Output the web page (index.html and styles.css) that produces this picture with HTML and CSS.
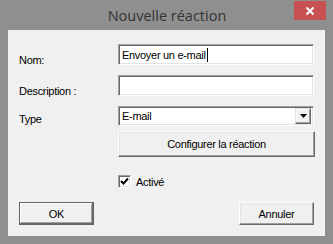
FILE: index.html
```html
<!DOCTYPE html>
<html lang="fr">
<head>
    <meta charset="UTF-8">
    <title>Nouvelle réaction</title>
    <link rel="stylesheet" href="styles.css">
</head>
<body>
    <div class="window">
        <div class="titlebar">
            <span></span>
            <div class="title">Nouvelle réaction</div>
            <div class="close">
                <svg width="10" height="10" viewBox="0 0 10 10">
                    <path d="M1.5 1.5 L8.5 8.5 M8.5 1.5 L1.5 8.5" stroke="#fff" stroke-width="2"/>
                </svg>
            </div>
        </div>

        <div class="client">
            <form class="form">
                <label class="lbl">Nom:</label>
                <div class="edit"><span>Envoyer un e-mail</span><i class="caret"></i></div>

                <label class="lbl">Description :</label>
                <div class="edit"></div>

                <label class="lbl">Type</label>
                <div class="combo">
                    <span>E-mail</span>
                    <div class="drop">
                        <svg width="7" height="4" viewBox="0 0 7 4"><path d="M0 0 H7 L3.5 4 Z" fill="#000"/></svg>
                    </div>
                </div>

                <span></span>
                <div class="btn wide">Configurer la réaction</div>

                <span></span>
                <div class="check-row">
                    <div class="check">
                        <svg width="9" height="9" viewBox="0 0 9 9"><path d="M1 4 L3.5 6.5 L8 1.5" stroke="#000" stroke-width="2" fill="none"/></svg>
                    </div>
                    <span>Activé</span>
                </div>
            </form>

            <div class="actions">
                <div class="btn default">OK</div>
                <div class="btn">Annuler</div>
            </div>
        </div>
    </div>
</body>
</html>
```

FILE: styles.css
```css
* {
    margin: 0;
    padding: 0;
    box-sizing: border-box;
}

body {
    width: 333px;
    height: 244px;
    overflow: hidden;
    font-family: "Liberation Sans", Arial, sans-serif;
    font-size: 11px;
    letter-spacing: -0.3px;
    color: #000;
}

.window {
    width: 333px;
    height: 244px;
    background: #8f8f8f;
    padding: 0 8px 8px 8px;
    display: flex;
    flex-direction: column;
}

.titlebar {
    height: 30px;
    display: grid;
    grid-template-columns: 1fr auto 1fr;
    align-items: start;
    margin: 0 -1px 0 0;
}

.title {
    font-family: "Open Sans", "Noto Sans", sans-serif;
    font-size: 14.5px;
    letter-spacing: 0;
    color: #333;
    line-height: 30px;
    padding-top: 1px;
}

.close {
    justify-self: end;
    margin-top: 1px;
    width: 32px;
    height: 19px;
    background: #c75050;
    display: flex;
    align-items: center;
    justify-content: center;
}

.client {
    flex: 1;
    background: #f0f0f0;
    padding: 14px 11px 11px 11px;
    display: flex;
    flex-direction: column;
}

.form {
    display: grid;
    grid-template-columns: 99px 196px;
    align-items: center;
}

.lbl {
    align-self: center;
}

.edit {
    height: 21px;
    background: #fff;
    border-top: 1px solid #a0a0a0;
    border-left: 1px solid #a0a0a0;
    border-right: 1px solid #fff;
    border-bottom: 1px solid #fff;
    box-shadow: inset 1px 1px 0 #696969, inset -1px -1px 0 #e3e3e3;
    padding: 0 3px;
    display: flex;
    align-items: center;
    margin-bottom: 10px;
}

.caret {
    display: inline-block;
    width: 1px;
    height: 14px;
    background: #000;
    margin-left: 1px;
}

.combo {
    height: 20px;
    background: #fff;
    border-top: 1px solid #a0a0a0;
    border-left: 1px solid #a0a0a0;
    border-right: 1px solid #fff;
    border-bottom: 1px solid #fff;
    box-shadow: inset 1px 1px 0 #696969, inset -1px -1px 0 #e3e3e3;
    padding: 2px 2px 2px 3px;
    display: flex;
    align-items: center;
    justify-content: space-between;
    margin-bottom: 5px;
}

.drop {
    width: 16px;
    height: 16px;
    background: #f0f0f0;
    border-top: 1px solid #e3e3e3;
    border-left: 1px solid #e3e3e3;
    border-right: 1px solid #696969;
    border-bottom: 1px solid #696969;
    box-shadow: inset -1px -1px 0 #a0a0a0, inset 1px 1px 0 #fff;
    display: flex;
    align-items: center;
    justify-content: center;
}

.btn {
    background: #f0f0f0;
    border-top: 1px solid #fff;
    border-left: 1px solid #fff;
    border-right: 1px solid #696969;
    border-bottom: 1px solid #696969;
    box-shadow: inset -1px -1px 0 #a0a0a0, inset 1px 1px 0 #e3e3e3;
    display: flex;
    align-items: center;
    justify-content: center;
    height: 23px;
    width: 75px;
}

.btn.wide {
    width: 197px;
    height: 26px;
}

.btn.default {
    border-color: #646464;
    box-shadow: inset -1px -1px 0 #696969, inset 1px 1px 0 #fff, inset -2px -2px 0 #a0a0a0;
}

.check-row {
    display: flex;
    align-items: center;
    gap: 5px;
    margin-top: 18px;
    height: 13px;
}

.check {
    width: 13px;
    height: 13px;
    background: #fff;
    border-top: 1px solid #a0a0a0;
    border-left: 1px solid #a0a0a0;
    border-right: 1px solid #fff;
    border-bottom: 1px solid #fff;
    box-shadow: inset 1px 1px 0 #696969, inset -1px -1px 0 #e3e3e3;
    display: flex;
    align-items: center;
    justify-content: center;
}

.actions {
    margin-top: auto;
    display: flex;
    justify-content: space-between;
}
```
